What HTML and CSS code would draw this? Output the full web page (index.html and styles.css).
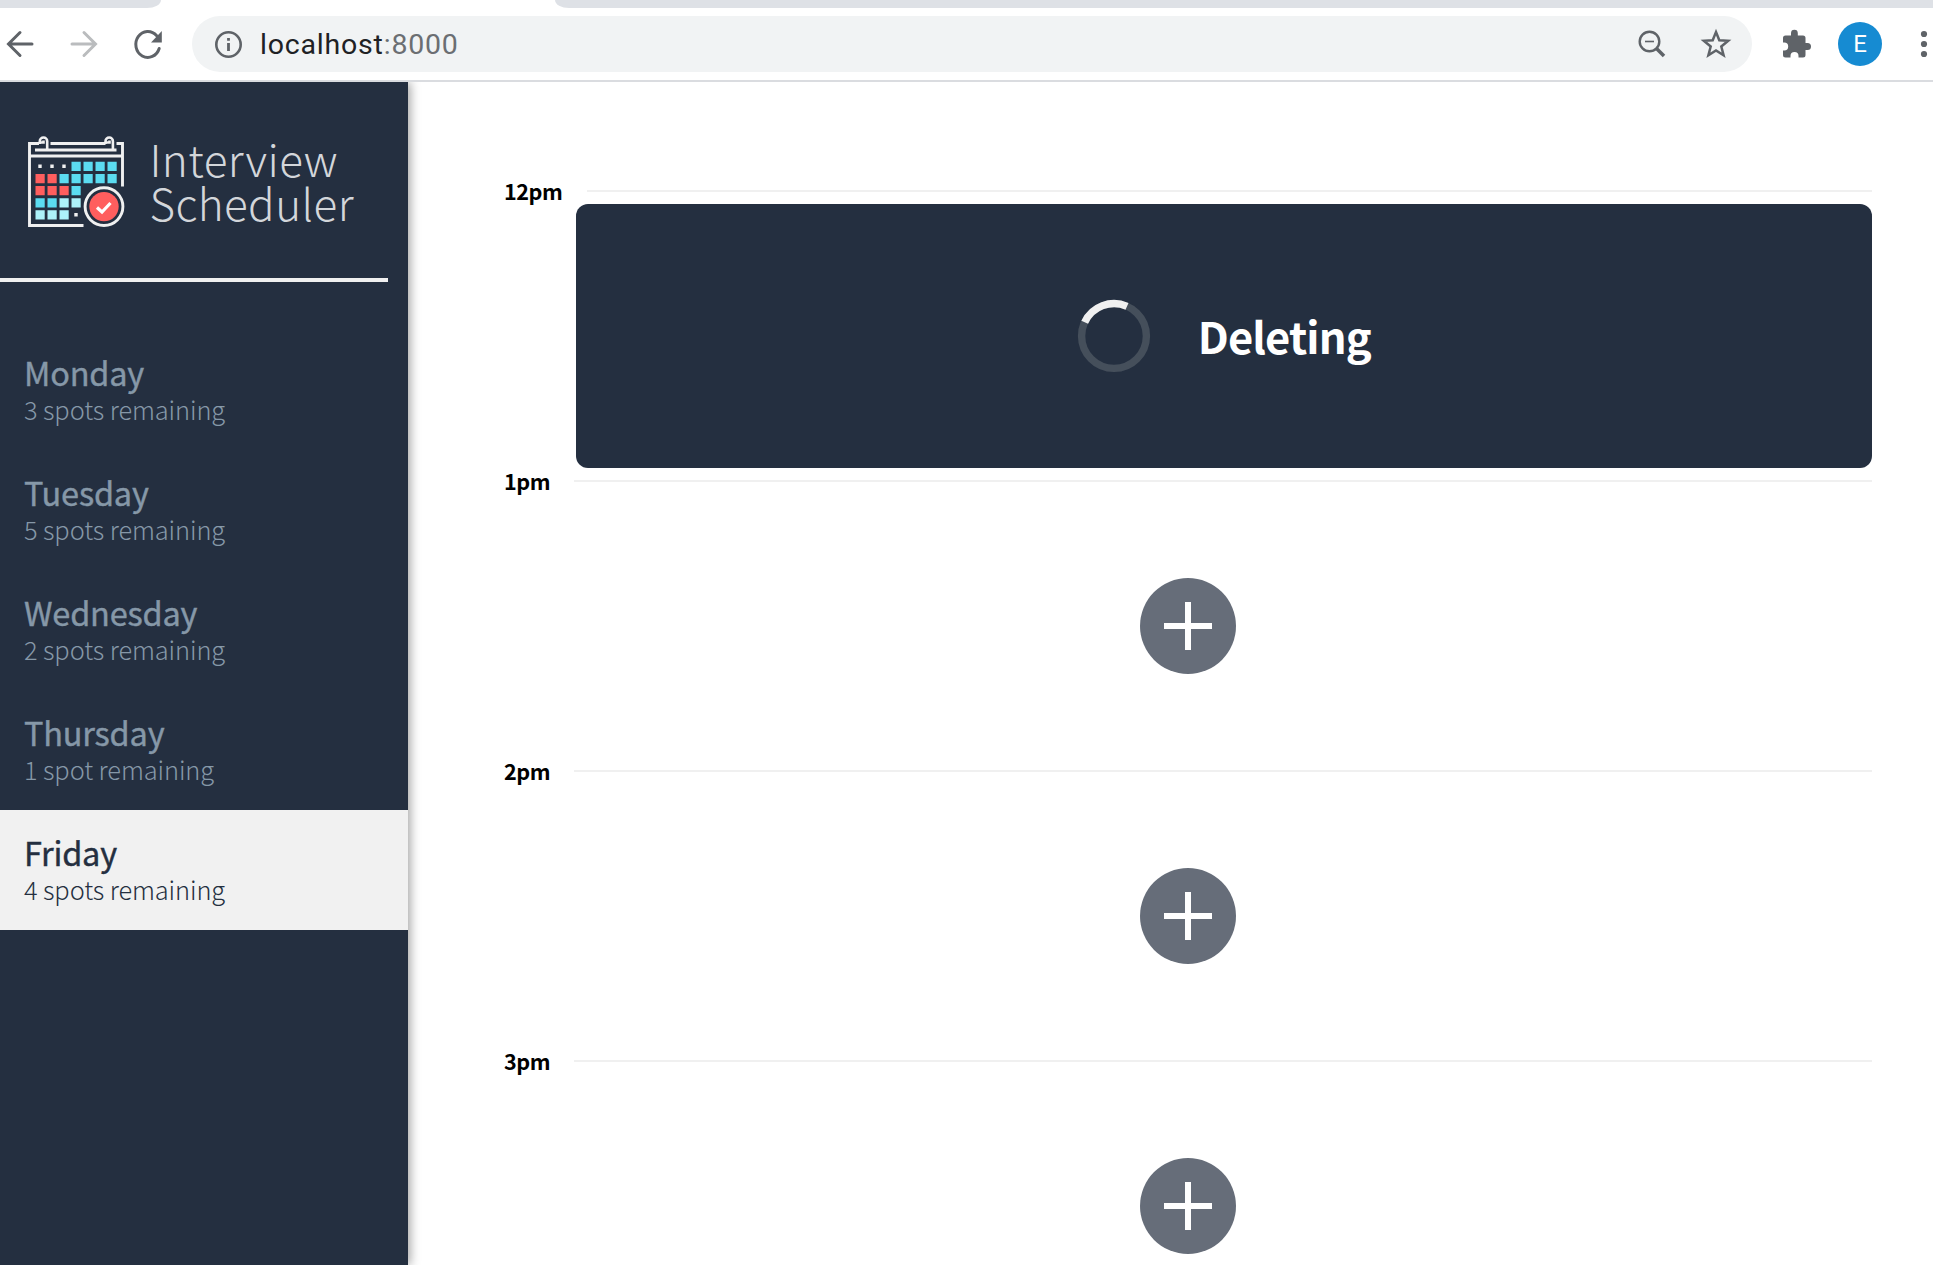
FILE: index.html
```html
<!DOCTYPE html>
<html lang="en">
<head>
<meta charset="utf-8">
<title>Interview Scheduler</title>
<link rel="stylesheet" href="styles.css">
</head>
<body>
<header class="browser">
  <div class="tabs"><span class="tab-left"></span><span class="tab-active"></span><span class="tab-right"></span></div>
  <div class="toolbar">
    <div class="controls">
      <svg width="40" height="40" viewBox="0 0 40 40" fill="none" stroke="#5f6368" stroke-width="3" stroke-linecap="round"><path d="M32 20H9M20 8.500L8.500 20L20 31.500"/></svg>
      <svg width="40" height="40" viewBox="0 0 40 40" fill="none" stroke="#babcbe" stroke-width="3" stroke-linecap="round"><path d="M8 20H31M20 8.500L31.500 20L20 31.500"/></svg>
      <svg width="40" height="40" viewBox="0 0 40 40"><path d="M31.200 24.500A12 13 0 1 1 28.500 11.500" fill="none" stroke="#5f6368" stroke-width="3" stroke-linecap="round"/><path d="M33.800 7V18.500H23Z" fill="#5f6368"/></svg>
    </div>
    <div class="address">
      <svg class="info" width="28" height="28" viewBox="0 0 28 28"><circle cx="14.500" cy="14.500" r="12.200" fill="none" stroke="#5f6368" stroke-width="2.600"/><path d="M13.100 13h2.800v8h-2.800zM13.100 8h2.800v2.800h-2.800z" fill="#5f6368"/></svg>
      <span class="url">localhost<span class="port">:8000</span></span>
      <svg class="magnifier" width="28" height="28" viewBox="0 0 28 28" fill="none" stroke="#5f6368"><circle cx="11.500" cy="11.500" r="9.800" stroke-width="2.400"/><path d="M7 11.500h9" stroke-width="1.600"/><path d="M18.500 18.500L26 26" stroke-width="3.600"/></svg>
      <svg class="star" width="32" height="32" viewBox="0 0 32 32"><path d="M16 4L19.300 12.200L28.200 12.800L21.300 18.500L23.600 27.200L16 22.500L8.400 27.200L10.700 18.500L3.800 12.800L12.700 12.200Z" fill="none" stroke="#5f6368" stroke-width="2.500"/></svg>
    </div>
    <svg class="puzzle" width="30" height="30" viewBox="0 0 30 30"><path d="M4 6.500H9V4.200a3.400 3.400 0 0 1 6.800 0V6.500H21a2.500 2.500 0 0 1 2.500 2.500V14H25.500a3.500 3.500 0 0 1 0 7H23.500V26a2.500 2.500 0 0 1-2.500 2.500H16.500V27a4 4 0 0 0-8 0V28.500H3.500A2.500 2.500 0 0 1 1 26V21.500H2.200a4 4 0 0 0 0-8H1V9A2.500 2.500 0 0 1 3.500 6.500Z" fill="#5f6368"/></svg>
    <span class="avatar">E</span>
    <svg class="more" width="8" height="28" viewBox="0 0 8 28" fill="#5f6368"><circle cx="4" cy="4" r="3.100"/><circle cx="4" cy="14" r="3.100"/><circle cx="4" cy="24" r="3.100"/></svg>
  </div>
</header>
<main class="layout">
  <section class="sidebar">
    <div class="logo">
      <svg width="97" height="92" viewBox="0 0 97 92">
        <g fill="none" stroke="#f0f0f0" stroke-width="2.900">
          <path d="M55.500 89.500H1.500V7.500H11M22.500 7.500H77.500M88.500 7.500H94.500V50.500M7 14H88.500M1.500 20H94.500"/>
          <path stroke-width="2.600" d="M11.800 8V5.200a3.700 3.700 0 0 1 7.400 0V14M11.800 6.500H15.500V4.500M77.500 8V5.200a3.700 3.700 0 0 1 7.400 0V14M77.500 6.500H81.500V4.500"/>
        </g>
        <g fill="#f0f0f0"><path d="M10.300 28.500h3.400v3.400h-3.400zM22.300 28.500h3.400v3.400h-3.400zM34.300 28.500h3.400v3.400h-3.400zM46.300 77h3.400v3.400h-3.400z"/></g>
        <path fill="#5bdcf1" d="M43.500 25.700h9.200v9.300h-9.200zM55.500 25.700h9.200v9.300h-9.200zM67.500 25.700h9.200v9.300h-9.200zM79.500 25.700h9.200v9.300h-9.200zM31.500 38h9.200v9.200h-9.200zM43.500 38h9.200v9.200h-9.200zM55.500 38h9.200v9.200h-9.200zM67.500 38h9.200v9.200h-9.200zM79.500 38h9.200v9.200h-9.200zM43.500 50h9.200v9.300h-9.200zM7.500 62.300h9.200v9.200H7.500zM19.500 62.300h9.200v9.200h-9.200z"/>
        <path fill="#ff5e5e" d="M7.500 38h9.200v9.200H7.500zM19.500 38h9.200v9.200h-9.200zM7.500 50h9.200v9.300H7.500zM19.500 50h9.200v9.300h-9.200zM31.500 50h9.200v9.300h-9.200z"/>
        <path fill="#adf2fa" d="M31.500 62.300h9.200v9.200h-9.200zM43.500 62.300h9.200v9.200h-9.200zM7.500 74.200h9.200v9.300H7.500zM19.500 74.200h9.200v9.300h-9.200zM31.500 74.200h9.200v9.300h-9.200z"/>
        <circle cx="76" cy="70.600" r="21.500" fill="#242f40"/>
        <circle cx="76" cy="70.600" r="18.900" fill="none" stroke="#f0f0f0" stroke-width="2.900"/>
        <circle cx="76" cy="70.600" r="14.700" fill="#ff5e5e"/>
        <path d="M69 71.500L74 76L82.500 67" fill="none" stroke="#fff" stroke-width="3.200"/>
      </svg>
      <h1 class="brand"><span>Interview</span><span>Scheduler</span></h1>
    </div>
    <hr class="separator">
    <nav>
      <ul class="days">
        <li class="day"><h2>Monday</h2><p>3 spots remaining</p></li>
        <li class="day"><h2>Tuesday</h2><p>5 spots remaining</p></li>
        <li class="day"><h2>Wednesday</h2><p>2 spots remaining</p></li>
        <li class="day"><h2>Thursday</h2><p>1 spot remaining</p></li>
        <li class="day selected"><h2>Friday</h2><p>4 spots remaining</p></li>
      </ul>
    </nav>
  </section>
  <section class="schedule">
    <article class="appointment">
      <header class="time"><h4>12pm</h4><hr></header>
      <div class="status">
        <svg width="74" height="74" viewBox="0 0 74 74" fill="none" stroke-width="7.400"><circle cx="37" cy="37" r="32.400" stroke="#454f5b"/><path d="M7.700 23.200A32.400 32.400 0 0 1 50 7.300" stroke="#f0f0f0"/></svg>
        <h1>Deleting</h1>
      </div>
    </article>
    <article class="appointment">
      <header class="time"><h4>1pm</h4><hr></header>
      <div class="empty"><svg width="96" height="96" viewBox="0 0 96 96"><circle cx="48" cy="48" r="48" fill="#666d79"/><path d="M24 48H72M48 24V72" stroke="#fff" stroke-width="6"/></svg></div>
    </article>
    <article class="appointment">
      <header class="time"><h4>2pm</h4><hr></header>
      <div class="empty"><svg width="96" height="96" viewBox="0 0 96 96"><circle cx="48" cy="48" r="48" fill="#666d79"/><path d="M24 48H72M48 24V72" stroke="#fff" stroke-width="6"/></svg></div>
    </article>
    <article class="appointment">
      <header class="time"><h4>3pm</h4><hr></header>
      <div class="empty"><svg width="96" height="96" viewBox="0 0 96 96"><circle cx="48" cy="48" r="48" fill="#666d79"/><path d="M24 48H72M48 24V72" stroke="#fff" stroke-width="6"/></svg></div>
    </article>
  </section>
</main>
</body>
</html>
```
FILE: styles.css
```css
* { box-sizing: border-box; margin: 0; padding: 0; }
html, body { height: 100%; overflow: hidden; }
body {
  display: flex;
  flex-direction: column;
  background: #fff;
  font-family: "Noto Sans CJK SC", "Noto Sans", sans-serif;
}
svg { display: block; flex: none; }

.browser { flex: none; height: 82px; border-bottom: 2px solid #dadce0; }
.tabs { display: flex; height: 8px; }
.tab-left { width: 161px; background: #dee1e6; border-bottom-right-radius: 14px 8px; }
.tab-active { width: 394px; }
.tab-right { flex: 1; background: #dee1e6; border-bottom-left-radius: 14px 8px; }
.toolbar { display: flex; align-items: center; height: 72px; }
.controls { display: flex; gap: 24px; width: 192px; flex: none; }
.address {
  display: flex;
  align-items: center;
  width: 1560px;
  height: 56px;
  padding: 0 20px 0 22px;
  border-radius: 28px;
  background: #f1f3f4;
}
.url {
  margin-left: 18px;
  padding-top: 1px;
  color: #202124;
  font: 28.500px/40px Roboto, sans-serif;
  letter-spacing: 0.8px;
}
.port { color: #6b6e72; }
.magnifier { margin-left: auto; }
.star { margin-left: 34px; }
.puzzle { margin-left: 30px; }
.avatar {
  width: 44px;
  height: 44px;
  margin-left: 26px;
  flex: none;
  border-radius: 50%;
  background: #168bd2;
  color: #fff;
  font: 24px/45px Roboto, sans-serif;
  text-align: center;
}
.more { margin-left: 38px; }

.layout { display: flex; flex: 1; min-height: 0; overflow: hidden; }
.sidebar {
  width: 408px;
  flex: none;
  background: #242f40;
  box-shadow: 2px 0 10px rgba(0, 0, 0, 0.38);
}
.logo { display: flex; height: 196px; padding: 54px 0 0 28px; }
.brand {
  display: flex;
  flex-direction: column;
  margin: 1px 0 0 24.500px;
  color: #d3d6da;
  font-size: 44px;
  font-weight: 300;
  line-height: 43.500px;
  letter-spacing: 0.4px;
}
.separator { width: 388px; height: 4px; border: 0; background: #f0f0f0; }
.days { padding-top: 48px; list-style: none; }
.day { height: 120px; padding: 24px 24px 0; color: #8698a8; }
.day h2 {
  font-size: 32.500px;
  font-weight: 400;
  line-height: 36px;
  letter-spacing: -0.2px;
  -webkit-text-stroke: 0.4px currentColor;
}
.day p { margin-top: 1px; font-size: 25.400px; font-weight: 300; line-height: 36px; letter-spacing: -0.1px; }
.day.selected { background: #f1f1f1; color: #242f40; }

.schedule { flex: 1; padding: 84px 61px 0 96px; }
.appointment { height: 290px; }
.time { display: flex; align-items: center; height: 50px; }
.time h4 { margin-right: 24.500px; color: #000; font-size: 21.600px; line-height: 50px; letter-spacing: -0.5px; }
.time hr { flex: 1; height: 2px; border: 0; background: #f0f0f0; }
.status {
  display: flex;
  align-items: center;
  justify-content: center;
  height: 264px;
  margin: -12px 0 0 72px;
  border-radius: 12px;
  background: #242f40;
  color: #fff;
}
.status h1 { margin-left: 46.500px; font-size: 43.500px; line-height: 60px; letter-spacing: -0.9px; }
.empty { display: flex; justify-content: center; height: 96px; margin-top: 72px; }
```
